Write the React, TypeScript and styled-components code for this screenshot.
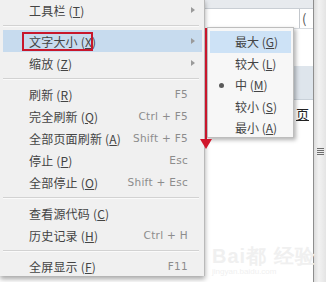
import React from 'react';
import styled, { createGlobalStyle } from 'styled-components';

type MenuEntry =
  | { kind: 'sep' }
  | { kind: 'item'; label: string; key: string; shortcut?: string; sub?: boolean; active?: boolean };

const mainMenu: MenuEntry[] = [
  { kind: 'item', label: '工具栏', key: 'T', sub: true },
  { kind: 'sep' },
  { kind: 'item', label: '文字大小', key: 'X', sub: true, active: true },
  { kind: 'item', label: '缩放', key: 'Z', sub: true },
  { kind: 'sep' },
  { kind: 'item', label: '刷新', key: 'R', shortcut: 'F5' },
  { kind: 'item', label: '完全刷新', key: 'Q', shortcut: 'Ctrl + F5' },
  { kind: 'item', label: '全部页面刷新', key: 'A', shortcut: 'Shift + F5' },
  { kind: 'item', label: '停止', key: 'P', shortcut: 'Esc' },
  { kind: 'item', label: '全部停止', key: 'O', shortcut: 'Shift + Esc' },
  { kind: 'sep' },
  { kind: 'item', label: '查看源代码', key: 'C' },
  { kind: 'item', label: '历史记录', key: 'H', shortcut: 'Ctrl + H' },
  { kind: 'sep' },
  { kind: 'item', label: '全屏显示', key: 'F', shortcut: 'F11' },
];

const sizeMenu = [
  { label: '最大', key: 'G', active: true },
  { label: '较大', key: 'L' },
  { label: '中', key: 'M', checked: true },
  { label: '较小', key: 'S' },
  { label: '最小', key: 'A' },
];

const GlobalStyle = createGlobalStyle`
  html, body {
    margin: 0;
    padding: 0;
    background: #ffffff;
    overflow: hidden;
  }
  body {
    font-family: "Noto Sans CJK SC", "Liberation Sans", sans-serif;
    font-size: 12px;
  }
`;

const Screen = styled.div`
  position: relative;
  width: 326px;
  height: 282px;
  display: grid;
  grid-template-columns: 205px 1fr 13px;
  overflow: hidden;
  background: #ffffff;
`;

// 左侧主菜单
const Menu = styled.div`
  background: #f0f0f0;
  border-right: 1px solid #b9b9b9;
  box-shadow: 0 3px 5px rgba(0, 0, 0, 0.35);
  height: 277px;
  margin-top: -1px;
  position: relative;
  z-index: 2;
`;

const Row = styled.div<{ $active?: boolean }>`
  height: 22px;
  margin: 0 2px 0 3px;
  display: flex;
  align-items: center;
  padding: 0 14px 0 26px;
  color: #444444;
  background: ${(p) => (p.$active ? '#c7dbee' : 'transparent')};
  white-space: nowrap;
`;

const Label = styled.span`
  flex: 1;
  letter-spacing: 0.2px;
`;

const Mnemonic = styled.span`
  text-decoration: underline;
  text-underline-offset: 1px;
`;

const Shortcut = styled.span`
  color: #8c8c8c;
  font-family: "DejaVu Sans", sans-serif;
  font-size: 10.5px;
  letter-spacing: 0.3px;
`;

const Arrow = styled.span`
  width: 0;
  height: 0;
  border-top: 3.5px solid transparent;
  border-bottom: 3.5px solid transparent;
  border-left: 4px solid #9a9a9a;
  margin-right: -7px;
`;

const Separator = styled.div`
  height: 9px;
  display: flex;
  align-items: center;
  padding: 0 5px 0 3px;
  &::after {
    content: '';
    flex: 1;
    height: 1px;
    background: #d2d2d2;
    box-shadow: 0 1px 0 #fafafa;
  }
`;

// 右侧网页区域
const Page = styled.div`
  display: flex;
  flex-direction: column;
  background: #ffffff;
`;

const TopStrip = styled.div`
  height: 8px;
  background: #e7eaee;
  border-bottom: 1px solid #c9ced4;
`;

const SearchRow = styled.div`
  height: 19px;
  display: flex;
  justify-content: flex-end;
  border-bottom: 1px solid #d9dde2;
`;

const SearchBox = styled.div`
  width: 11px;
  border-left: 1px solid #c3c7cc;
  color: #555;
  font-size: 13px;
  line-height: 19px;
  padding-left: 2px;
  overflow: hidden;
`;

const Band = styled.div`
  margin-top: 37px;
  height: 33px;
  background: #dee5ec;
  border-bottom: 1px solid #c9d1d9;
`;

const PageText = styled.div`
  padding: 4px 0 0 91px;
  font-size: 13px;
  color: #222;
  text-decoration: underline;
  white-space: nowrap;
  overflow: hidden;
`;

const Scrollbar = styled.div`
  position: relative;
  background: linear-gradient(90deg, #dcdcdc, #f2f2f2 40%, #e4e4e4);
  border-left: 1px solid #8e8e8e;
  display: flex;
  justify-content: center;
  padding-top: 148px;
`;

const Grip = styled.div`
  width: 7px;
  height: 8px;
  background: repeating-linear-gradient(180deg, #6d6d6d 0 1px, transparent 1px 2px);
`;

const Watermark = styled.div`
  position: absolute;
  left: 212px;
  top: 246px;
  color: #f0f0f0;
  font-family: "Liberation Sans", sans-serif;
  line-height: 1;
  z-index: 1;
`;

const WatermarkBig = styled.div`
  font-size: 20px;
  font-weight: bold;
  letter-spacing: 1px;
`;

const WatermarkSmall = styled.div`
  font-size: 8px;
  margin-top: 2px;
`;

// 子菜单
const SubMenu = styled.div`
  position: absolute;
  left: 207px;
  top: 27px;
  width: 87px;
  height: 111px;
  padding-top: 3px;
  box-sizing: border-box;
  background: #f7f7f7;
  border: 1px solid #bdbdbd;
  box-shadow: 2px 2px 4px rgba(0, 0, 0, 0.3);
  z-index: 3;
`;

const SubRow = styled.div<{ $active?: boolean }>`
  position: relative;
  height: 21.5px;
  margin: 0 2px;
  display: flex;
  align-items: center;
  padding-left: 25px;
  color: #444444;
  background: ${(p) => (p.$active ? '#cde2f6' : 'transparent')};
`;

const Dot = styled.span`
  position: absolute;
  left: 9px;
  top: 9px;
  width: 5px;
  height: 5px;
  border-radius: 50%;
  background: #5a5a5a;
`;

// 红色标注
const RedBox = styled.div`
  position: absolute;
  left: 22px;
  top: 32px;
  width: 67px;
  height: 15px;
  border: 2.5px solid #c8172c;
  z-index: 4;
`;

const RedLine = styled.div`
  position: absolute;
  left: 205px;
  top: 28px;
  width: 2px;
  height: 112px;
  background: #c8172c;
  z-index: 4;
  &::after {
    content: '';
    position: absolute;
    left: -5px;
    bottom: -9px;
    border-left: 6px solid transparent;
    border-right: 6px solid transparent;
    border-top: 10px solid #d0172c;
  }
`;

const App = () => {
  return (
    <>
      <GlobalStyle />
      <Screen>
        <Menu>
          {mainMenu.map((m, i) =>
            m.kind === 'sep' ? (
              <Separator key={i} />
            ) : (
              <Row key={i} $active={m.active}>
                <Label>
                  {m.label} (<Mnemonic>{m.key}</Mnemonic>)
                </Label>
                {m.shortcut && <Shortcut>{m.shortcut}</Shortcut>}
                {m.sub && <Arrow />}
              </Row>
            )
          )}
        </Menu>
        <Page>
          <TopStrip />
          <SearchRow>
            <SearchBox>(</SearchBox>
          </SearchRow>
          <Band />
          <PageText>页</PageText>
        </Page>
        <Scrollbar>
          <Grip />
        </Scrollbar>

        <SubMenu>
          {sizeMenu.map((s) => (
            <SubRow key={s.key} $active={s.active}>
              {s.checked && <Dot />}
              {s.label} (<Mnemonic>{s.key}</Mnemonic>)
            </SubRow>
          ))}
        </SubMenu>

        <Watermark>
          <WatermarkBig>Bai都 经验</WatermarkBig>
          <WatermarkSmall>jingyan.baidu.com</WatermarkSmall>
        </Watermark>

        <RedBox />
        <RedLine />
      </Screen>
    </>
  );
};

export default App;
